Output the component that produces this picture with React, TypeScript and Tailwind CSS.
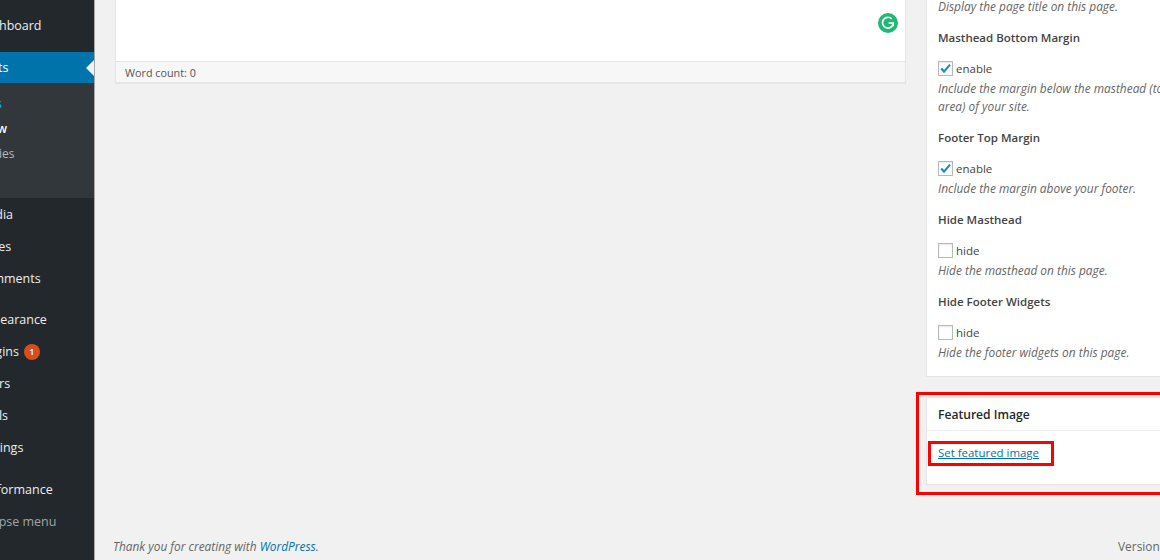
const font = "font-['Open_Sans','Noto_Sans',sans-serif]";

const MenuRow = ({ label, badge }: { label: string; badge?: string }) => (
  <div className="h-8 pl-[43px] pt-[2px] flex items-center text-[12.5px] text-[#eeeeee] whitespace-nowrap">
    {label}
    {badge && (
      <span className="ml-[5px] w-4 h-4 rounded-full bg-[#d54e21] text-white text-[9px] font-semibold flex items-center justify-center">
        {badge}
      </span>
    )}
  </div>
);

const Field = ({
  title,
  label,
  checked,
  lines,
}: {
  title: string;
  label: string;
  checked: boolean;
  lines: string[];
}) => (
  <div className="mt-[13px]">
    <div className="h-5 flex items-center text-[11.5px] font-semibold text-[#444444]">{title}</div>
    <div className="mt-2.5 h-5 flex items-center gap-[3px]">
      <span className="w-[15px] h-[15px] border border-[#b4b9be] bg-white shadow-[inset_0_1px_2px_rgba(0,0,0,0.1)] flex items-center justify-center">
        {checked && (
          <svg width="13" height="13" viewBox="0 0 13 13" fill="none">
            <path d="M2.2 6.6 L5 9.6 L11 2.6" stroke="#1e8cbe" strokeWidth="2.2" />
          </svg>
        )}
      </span>
      <span className="pt-px text-[11.5px] text-[#444444]">{label}</span>
    </div>
    <div className="mt-px text-[11.9px] italic leading-[18px] text-[#666666] whitespace-nowrap">
      {lines.map((line) => (
        <div key={line}>{line}</div>
      ))}
    </div>
  </div>
);

export default function App() {
  return (
    <div className={`${font} flex h-[560px] w-[1160px] overflow-hidden bg-[#f1f1f1]`}>
      <aside className="w-[95px] shrink-0 h-full overflow-hidden bg-[#23282d] border-r border-[#a8a8a8]">
        <div className="relative -ml-[66px] w-[160px] pt-[9px]">
          <MenuRow label="Dashboard" />
          <div className="relative mt-[11px] h-[31px] pl-[43px] pt-[2px] flex items-center bg-[#0073aa] text-[12.5px] text-white">
            Posts
            <span className="absolute right-0 top-2 w-0 h-0 border-y-8 border-y-transparent border-r-8 border-r-[#f1f1f1]" />
          </div>
          <div className="h-[115px] bg-[#32373c] pt-2 pl-[21px] text-[12px] text-[#b4b9be]">
            <div className="h-[25px] leading-[25px] text-[#00b9eb]">All Posts</div>
            <div className="h-[25px] leading-[25px] font-semibold text-white">Add New</div>
            <div className="h-[25px] leading-[25px]">Categories</div>
            <div className="h-[25px] leading-[25px]">Tags</div>
          </div>
          <MenuRow label="Media" />
          <MenuRow label="Pages" />
          <MenuRow label="Comments" />
          <div className="h-[9px]" />
          <MenuRow label="Appearance" />
          <MenuRow label="Plugins" badge="1" />
          <MenuRow label="Users" />
          <MenuRow label="Tools" />
          <MenuRow label="Settings" />
          <div className="h-2.5" />
          <MenuRow label="Performance" />
          <div className="h-8 pl-9 pt-[2px] flex items-center text-[12.5px] text-[#a0a5aa] whitespace-nowrap">Collapse menu</div>
        </div>
      </aside>

      <main className="flex-1 min-w-0 h-full flex flex-col">
        <div className="flex-1 min-h-0 flex gap-5 pl-5">
          <section className="w-[791px] shrink-0 self-start">
            <div className="relative h-[61px] bg-white border-x border-[#e5e5e5]">
              <svg className="absolute right-[7px] top-[13px]" width="20" height="20" viewBox="0 0 20 20" fill="none">
                <circle cx="10" cy="10" r="10" fill="#1fb874" />
                <path d="M13.8 5.9 A5.4 5.4 0 1 0 15.3 10.2 L10.6 10.2" stroke="white" strokeWidth="1.7" />
                <path d="M15.3 10 L15.3 13.2" stroke="white" strokeWidth="1.4" />
              </svg>
            </div>
            <div className="h-[22px] bg-[#f7f7f7] border border-[#e5e5e5] pl-[9px] pt-[2px] flex items-center text-[10.8px] text-[#555555] shadow-[0_1px_1px_rgba(0,0,0,0.04)]">
              Word count: 0
            </div>
          </section>

          <section className="w-[280px] shrink-0">
            <div className="bg-white border border-[#e5e5e5] border-t-0 h-[377px] px-[11px] overflow-hidden">
              <div className="-mt-[3px] h-[18px] text-[11.9px] italic leading-[18px] text-[#666666]">
                Display the page title on this page.
              </div>
              <Field
                title="Masthead Bottom Margin"
                label="enable"
                checked
                lines={["Include the margin below the masthead (top", "area) of your site."]}
              />
              <Field
                title="Footer Top Margin"
                label="enable"
                checked
                lines={["Include the margin above your footer."]}
              />
              <Field title="Hide Masthead" label="hide" checked={false} lines={["Hide the masthead on this page."]} />
              <Field
                title="Hide Footer Widgets"
                label="hide"
                checked={false}
                lines={["Hide the footer widgets on this page."]}
              />
            </div>

            <div className="relative mt-5 h-[88px] bg-white border border-[#e5e5e5]">
              <span className="absolute -left-[11px] -top-[6px] -bottom-[11px] -right-[11px] border-[3px] border-[#ff0000]" />
              <div className="h-[33px] pt-[2px] border-b border-[#eeeeee] px-[11px] flex items-center text-[12.1px] font-semibold text-[#23282d]">
                Featured Image
              </div>
              <div className="relative mt-[10px] ml-[11px] h-[24px] flex items-center">
                <span className="absolute -left-[10px] top-0 w-[126px] h-[25px] border-[3px] border-[#ff0000]" />
                <a className="text-[11.45px] text-[#0073aa] underline">Set featured image</a>
              </div>
            </div>
          </section>
        </div>

        <footer className="h-[23px] shrink-0 flex pl-[18px] items-start text-[11.9px] leading-[18px] text-[#666666] whitespace-nowrap">
          <p className="w-[1005px] shrink-0 italic">
            Thank you for creating with <a className="text-[#0073aa]">WordPress</a>.
          </p>
          <span>Version 4.9.8</span>
        </footer>
      </main>
    </div>
  );
}
